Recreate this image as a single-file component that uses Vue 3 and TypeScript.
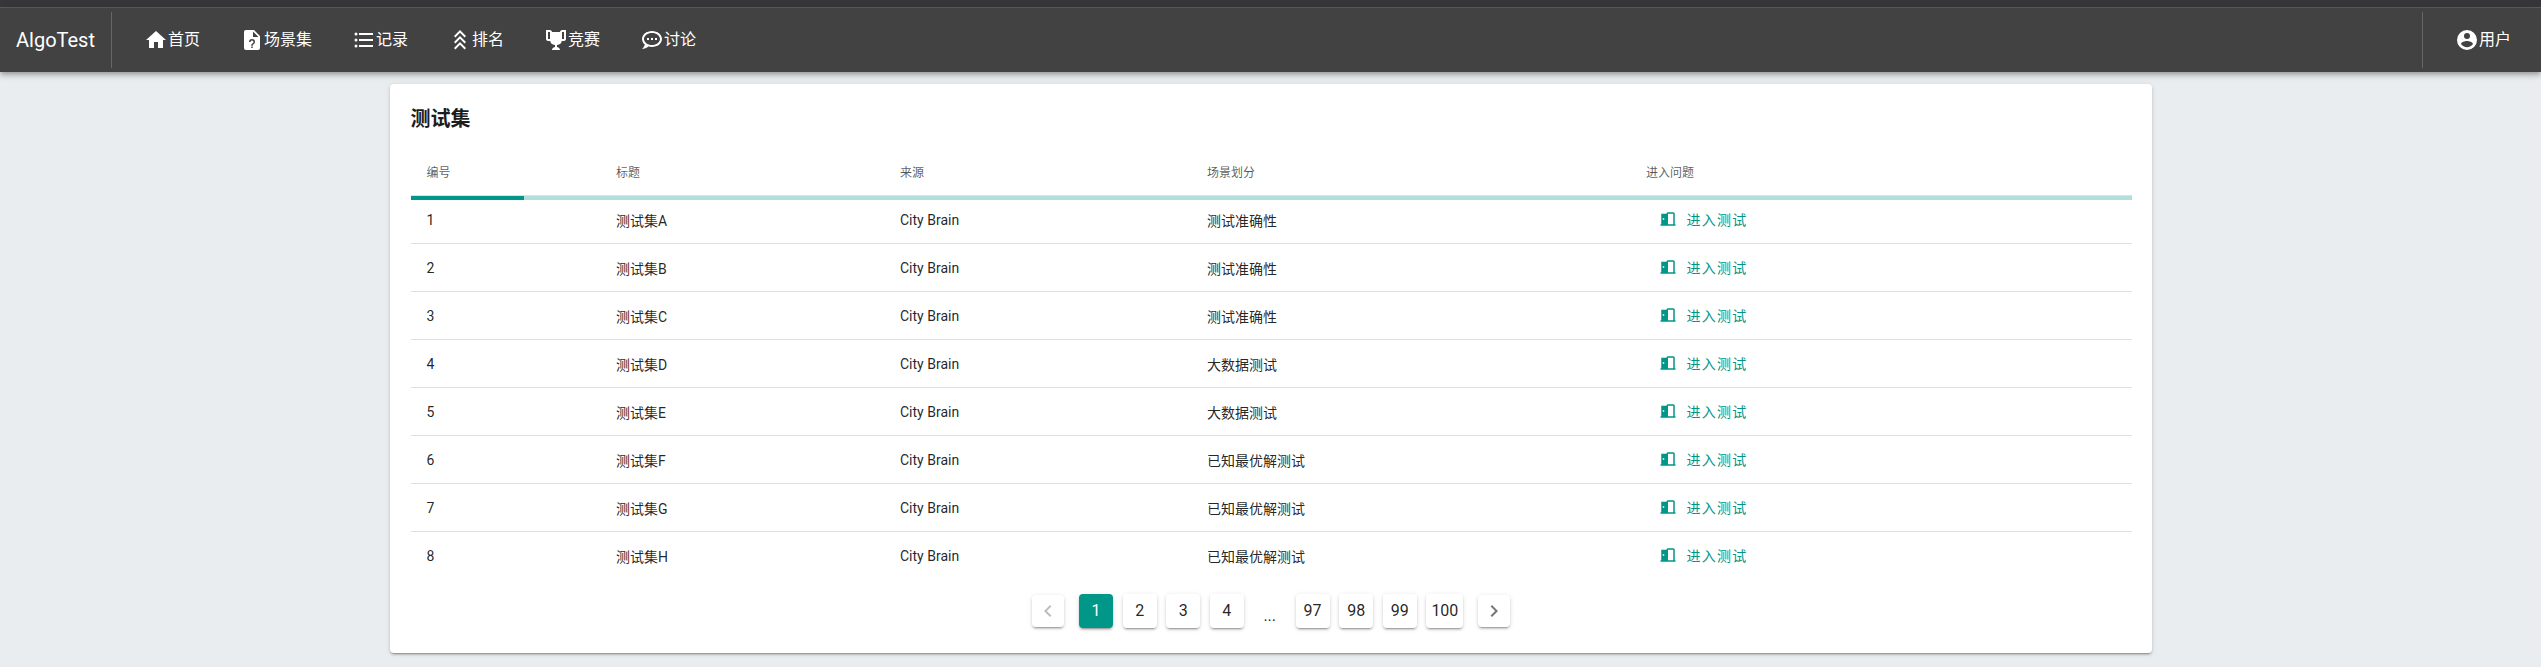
<script setup lang="ts">
interface NavItem {
  label: string;
  icon: string;
}

const navItems: NavItem[] = [
  { label: "首页", icon: "M10 20v-6h4v6h5v-8h3L12 3 2 12h3v8z" },
  {
    label: "场景集",
    icon: "M6,2C4.89,2 4,2.89 4,4V20A2,2 0 0,0 6,22H18A2,2 0 0,0 20,20V8L14,2H6M13,3.5L18.5,9H13V3.5M12,11A3,3 0 0,1 15,14C15,15.88 12.75,16.06 12.75,17.75H11.25C11.25,15.31 13.5,15.5 13.5,14A1.5,1.5 0 0,0 12,12.5A1.5,1.5 0 0,0 10.5,14H9A3,3 0 0,1 12,11M11.25,18.5H12.75V20H11.25V18.5Z",
  },
  {
    label: "记录",
    icon: "M7,5H21V7H7V5M7,13V11H21V13H7M4,4.5A1.5,1.5 0 0,1 5.5,6A1.5,1.5 0 0,1 4,7.5A1.5,1.5 0 0,1 2.5,6A1.5,1.5 0 0,1 4,4.5M4,10.5A1.5,1.5 0 0,1 5.5,12A1.5,1.5 0 0,1 4,13.5A1.5,1.5 0 0,1 2.5,12A1.5,1.5 0 0,1 4,10.5M7,19V17H21V19H7M4,16.5A1.5,1.5 0 0,1 5.5,18A1.5,1.5 0 0,1 4,19.5A1.5,1.5 0 0,1 2.5,18A1.5,1.5 0 0,1 4,16.5Z",
  },
  {
    label: "排名",
    icon: "M16.59,9.42L12,4.83L7.41,9.42L6,8L12,2L18,8L16.59,9.42M16.59,15.42L12,10.83L7.41,15.42L6,14L12,8L18,14L16.59,15.42M16.59,21.42L12,16.83L7.41,21.42L6,20L12,14L18,20L16.59,21.42Z",
  },
  {
    label: "竞赛",
    icon: "M20.2,2H19.5H18C17.1,2 16,3 16,4H8C8,3 6.9,2 6,2H4.5H3.8H2V11C2,12 3,13 4,13H6.2C6.6,15 7.9,16.7 11,17V19.08C8,19.54 8,22 8,22H16C16,22 16,19.54 13,19.08V17C16.1,16.7 17.4,15 17.8,13H20C21,13 22,12 22,11V2H20.2M4,11V4H6V6V11C5.1,11 4.3,11 4,11M20,11C19.7,11 18.9,11 18,11V6V4H20V11Z",
  },
  {
    label: "讨论",
    icon: "M12 3C6.5 3 2 6.58 2 11C2.05 13.15 3.06 15.17 4.75 16.5C4.75 17.1 4.33 18.67 2 21C4.37 20.89 6.64 20 8.47 18.5C9.61 18.83 10.81 19 12 19C17.5 19 22 15.42 22 11S17.5 3 12 3M12 17C7.58 17 4 14.31 4 11S7.58 5 12 5 20 7.69 20 11 16.42 17 12 17M17 12V10H15V12H17M13 12V10H11V12H13M9 12V10H7V12H9Z",
  },
];

const userIcon =
  "M12,19.2C9.5,19.2 7.29,17.92 6,16C6.03,14 10,12.9 12,12.9C14,12.9 17.97,14 18,16C16.71,17.92 14.5,19.2 12,19.2M12,5A3,3 0 0,1 15,8A3,3 0 0,1 12,11A3,3 0 0,1 9,8A3,3 0 0,1 12,5M12,2A10,10 0 0,0 2,12A10,10 0 0,0 12,22A10,10 0 0,0 22,12A10,10 0 0,0 12,2Z";
const doorIcon =
  "M12,3C10.89,3 10,3.89 10,5H3V19H2V21H22V19H21V5C21,3.89 20.11,3 19,3H12M12,5H19V19H12V5M5,11H7V13H5V11Z";

const headers = ["编号", "标题", "来源", "场景划分", "进入问题"];

const rows = [
  { id: 1, title: "测试集A", kind: "测试准确性" },
  { id: 2, title: "测试集B", kind: "测试准确性" },
  { id: 3, title: "测试集C", kind: "测试准确性" },
  { id: 4, title: "测试集D", kind: "大数据测试" },
  { id: 5, title: "测试集E", kind: "大数据测试" },
  { id: 6, title: "测试集F", kind: "已知最优解测试" },
  { id: 7, title: "测试集G", kind: "已知最优解测试" },
  { id: 8, title: "测试集H", kind: "已知最优解测试" },
];

const pages: (number | string)[] = [1, 2, 3, 4, "...", 97, 98, 99, 100];
</script>

<template>
  <div class="page">
    <div class="topstrip"></div>
    <header class="appbar">
      <div class="logo">AlgoTest</div>
      <div class="divider"></div>
      <nav class="nav">
        <a v-for="item in navItems" :key="item.label" class="navbtn">
          <svg class="icon" viewBox="0 0 24 24"><path :d="item.icon" /></svg>
          <span>{{ item.label }}</span>
        </a>
      </nav>
      <div class="divider right"></div>
      <a class="navbtn user">
        <svg class="icon" viewBox="0 0 24 24"><path :d="userIcon" /></svg>
        <span>用户</span>
      </a>
    </header>

    <main class="card">
      <h2 class="title">测试集</h2>
      <div class="tablewrap">
        <table>
          <colgroup>
            <col class="col-id" />
            <col class="col-title" />
            <col class="col-source" />
            <col class="col-kind" />
            <col />
          </colgroup>
          <thead>
            <tr>
              <th v-for="h in headers" :key="h">{{ h }}</th>
            </tr>
          </thead>
          <tbody>
            <tr v-for="row in rows" :key="row.id">
              <td>{{ row.id }}</td>
              <td>{{ row.title }}</td>
              <td>City Brain</td>
              <td>{{ row.kind }}</td>
              <td>
                <a class="enter">
                  <svg class="door" viewBox="0 0 24 24"><path :d="doorIcon" /></svg>
                  <span>进入测试</span>
                </a>
              </td>
            </tr>
          </tbody>
        </table>
        <div class="progress"><div class="progress-fill"></div></div>
      </div>

      <div class="pagination">
        <button class="pagenav disabled">
          <svg viewBox="0 0 24 24"><path d="M15.41,16.58L10.83,12L15.41,7.41L14,6L8,12L14,18L15.41,16.58Z" /></svg>
        </button>
        <template v-for="p in pages" :key="p">
          <span v-if="p === '...'" class="more">...</span>
          <button v-else class="pageitem" :class="{ active: p === 1 }">{{ p }}</button>
        </template>
        <button class="pagenav">
          <svg viewBox="0 0 24 24"><path d="M8.59,16.58L13.17,12L8.59,7.41L10,6L16,12L10,18L8.59,16.58Z" /></svg>
        </button>
      </div>
    </main>
  </div>
</template>

<style>
html,
body {
  margin: 0;
  background: #e9edf0;
}
</style>

<style scoped>
.page {
  height: 667px;
  overflow: hidden;
  background: #e9edf0;
  font-family: Roboto, "Noto Sans CJK SC", sans-serif;
  color: rgba(0, 0, 0, 0.87);
}

.topstrip {
  height: 7px;
  background: #36363b;
  border-bottom: 1px solid #5e5e62;
}

.appbar {
  height: 64px;
  display: flex;
  align-items: center;
  background: #424242;
  color: #fff;
  box-shadow: 0 2px 4px -1px rgba(0, 0, 0, 0.2), 0 4px 5px 0 rgba(0, 0, 0, 0.14), 0 1px 10px 0 rgba(0, 0, 0, 0.12);
  position: relative;
}

.logo {
  font-size: 20px;
  padding-left: 16px;
  width: 95px;
}

.divider {
  width: 1px;
  height: 56px;
  background: rgba(255, 255, 255, 0.2);
}

.divider.right {
  margin-left: auto;
}

.nav {
  display: flex;
  gap: 8px;
  padding: 0 16px;
}

.navbtn {
  display: flex;
  align-items: center;
  padding: 0 16px;
  font-size: 16px;
  line-height: 24px;
  color: #fff;
}

.navbtn.user {
  margin-left: 16px;
  margin-right: 14px;
}

.icon {
  width: 24px;
  height: 24px;
  fill: #fff;
  flex: none;
}

.card {
  box-sizing: border-box;
  width: 1762px;
  height: 569px;
  margin: 12px auto 0;
  padding: 19px 20px 0 21px;
  background: #fff;
  border-radius: 4px;
  box-shadow: 0 3px 1px -2px rgba(0, 0, 0, 0.2), 0 2px 2px 0 rgba(0, 0, 0, 0.14), 0 1px 5px 0 rgba(0, 0, 0, 0.12);
}

.title {
  margin: 0 0 13px;
  font-size: 20px;
  line-height: 32px;
  font-weight: 700;
  color: #1c1c1c;
}

.tablewrap {
  position: relative;
}

table {
  width: 100%;
  table-layout: fixed;
  border-collapse: collapse;
}

.col-id {
  width: 189.5px;
}

.col-title {
  width: 284px;
}

.col-source {
  width: 307px;
}

.col-kind {
  width: 439px;
}

th {
  height: 47px;
  padding: 1px 16px 0;
  box-sizing: border-box;
  text-align: left;
  font-size: 12px;
  font-weight: 400;
  color: rgba(0, 0, 0, 0.66);
  border-bottom: 1px solid #e0e0e0;
}

td {
  height: 48px;
  padding: 1px 16px 0;
  box-sizing: border-box;
  font-size: 14px;
  border-bottom: 1px solid #e0e0e0;
}

tbody tr:last-child td {
  border-bottom: none;
}

.progress {
  position: absolute;
  left: 0;
  right: 0;
  top: 48px;
  height: 4px;
  background: #b2dfdb;
}

.progress-fill {
  width: 113px;
  height: 100%;
  background: #009688;
}

.enter {
  display: inline-flex;
  align-items: center;
  padding-left: 12.5px;
  color: #009688;
  letter-spacing: 1.25px;
}

.door {
  width: 18px;
  height: 18px;
  fill: #009688;
  margin-right: 10px;
}

.pagination {
  display: flex;
  justify-content: center;
  align-items: center;
  margin: 10px 0 0 -1px;
  padding: 4.8px 0;
}

.pageitem,
.pagenav {
  border: none;
  padding: 0;
  background: #fff;
  border-radius: 4px;
  font-family: inherit;
  color: rgba(0, 0, 0, 0.87);
  box-shadow: 0 3px 1px -2px rgba(0, 0, 0, 0.2), 0 2px 2px 0 rgba(0, 0, 0, 0.14), 0 1px 5px 0 rgba(0, 0, 0, 0.12);
}

.pageitem {
  min-width: 34px;
  height: 34px;
  margin: 0 4.8px;
  padding: 0 5px;
  font-size: 16px;
  box-sizing: border-box;
}

.pageitem.active {
  background: #009688;
  color: #fff;
}

.pagenav {
  width: 32px;
  height: 32px;
  margin: 0 10px;
  display: flex;
  align-items: center;
  justify-content: center;
}

.pagenav.disabled {
  margin-left: 11.4px;
}

.pagenav svg {
  width: 24px;
  height: 24px;
  fill: rgba(0, 0, 0, 0.54);
}

.pagenav.disabled svg {
  fill: rgba(0, 0, 0, 0.26);
}

.more {
  width: 32.6px;
  height: 34px;
  margin: 0 4.8px;
  display: flex;
  align-items: flex-end;
  justify-content: center;
  font-size: 16px;
  line-height: 24px;
}
</style>
